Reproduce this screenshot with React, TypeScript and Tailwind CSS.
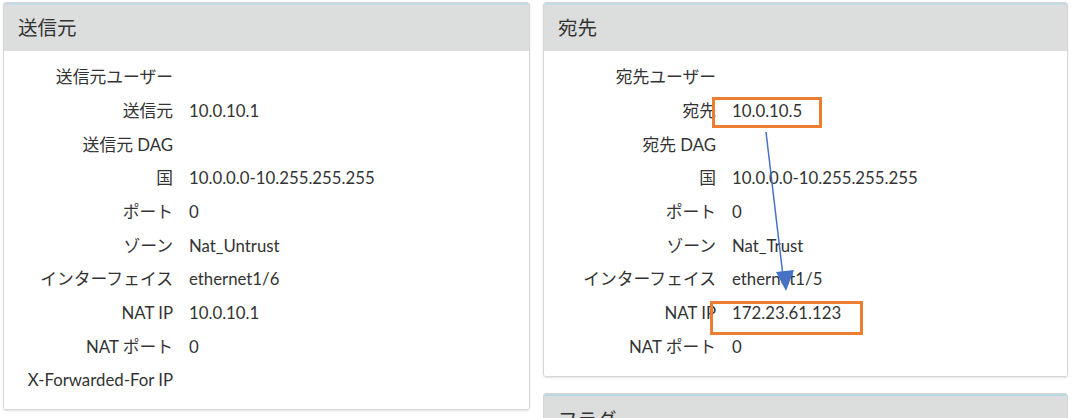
type Row = { label: string; value?: string };

const sourceRows: Row[] = [
  { label: '送信元ユーザー' },
  { label: '送信元', value: '10.0.10.1' },
  { label: '送信元 DAG' },
  { label: '国', value: '10.0.0.0-10.255.255.255' },
  { label: 'ポート', value: '0' },
  { label: 'ゾーン', value: 'Nat_Untrust' },
  { label: 'インターフェイス', value: 'ethernet1/6' },
  { label: 'NAT IP', value: '10.0.10.1' },
  { label: 'NAT ポート', value: '0' },
  { label: 'X-Forwarded-For IP' },
];

const destRows: Row[] = [
  { label: '宛先ユーザー' },
  { label: '宛先', value: '10.0.10.5' },
  { label: '宛先 DAG' },
  { label: '国', value: '10.0.0.0-10.255.255.255' },
  { label: 'ポート', value: '0' },
  { label: 'ゾーン', value: 'Nat_Trust' },
  { label: 'インターフェイス', value: 'ethernet1/5' },
  { label: 'NAT IP', value: '172.23.61.123' },
  { label: 'NAT ポート', value: '0' },
];

function PanelHeader({ title }: { title: string }) {
  return (
    <div className="h-[48px] flex items-center pl-[14px] bg-[#dcdddd] border-t-2 border-[#c4dbe5] text-[19.5px] text-[#333]">
      {title}
    </div>
  );
}

function Rows({ rows, labelWidth }: { rows: Row[]; labelWidth: string }) {
  return (
    <div>
      {rows.map((r) => (
        <div key={r.label} className="flex items-center h-[33.7px] text-[16.8px] text-[#333]">
          <div className={`${labelWidth} shrink-0 text-right whitespace-nowrap`}>{r.label}</div>
          <div className="ml-4 whitespace-nowrap">{r.value}</div>
        </div>
      ))}
    </div>
  );
}

export default function App() {
  return (
    <div
      className="relative w-[1080px] h-[418px] overflow-hidden bg-white flex items-start"
      style={{ fontFamily: "Lato, 'Noto Sans CJK JP', sans-serif" }}
    >
      <div className="ml-[3px] mt-[2px] w-[527px] rounded-[3px] border border-[#d6d6d6] shadow-[0_1px_2px_rgba(0,0,0,0.12)] overflow-hidden">
        <PanelHeader title="送信元" />
        <div className="pt-[9px] pb-[12px] bg-white">
          <Rows rows={sourceRows} labelWidth="w-[169px]" />
        </div>
      </div>

      <div className="ml-[13px] mt-[2px] w-[525px] flex flex-col gap-[16px]">
        <div className="rounded-[3px] border border-[#d6d6d6] shadow-[0_1px_2px_rgba(0,0,0,0.12)] overflow-hidden">
          <PanelHeader title="宛先" />
          <div className="pt-[9px] pb-[13px] bg-white">
            <Rows rows={destRows} labelWidth="w-[172px]" />
          </div>
        </div>
        <div className="rounded-[3px] border border-[#d6d6d6] overflow-hidden">
          <div className="h-[48px] flex items-center pl-[14px] bg-[#dcdddd] border-t-2 border-[#b9d6e2] text-[19.5px] text-[#333]">
            フラグ
          </div>
        </div>
      </div>

      {/* annotations */}
      <div className="absolute left-[712px] top-[97px] w-[110px] h-[31px] border-[3px] border-[#ed7d31]" />
      <div className="absolute left-[710px] top-[301px] w-[153px] h-[34px] border-[3px] border-[#ed7d31]" />
      <svg className="absolute left-0 top-0" width="1080" height="418" viewBox="0 0 1080 418">
        <line x1="766" y1="132" x2="783" y2="276" stroke="#4472c4" strokeWidth="1.5" />
        <polygon points="776,272 794,270 786,291" fill="#4472c4" />
      </svg>
    </div>
  );
}
